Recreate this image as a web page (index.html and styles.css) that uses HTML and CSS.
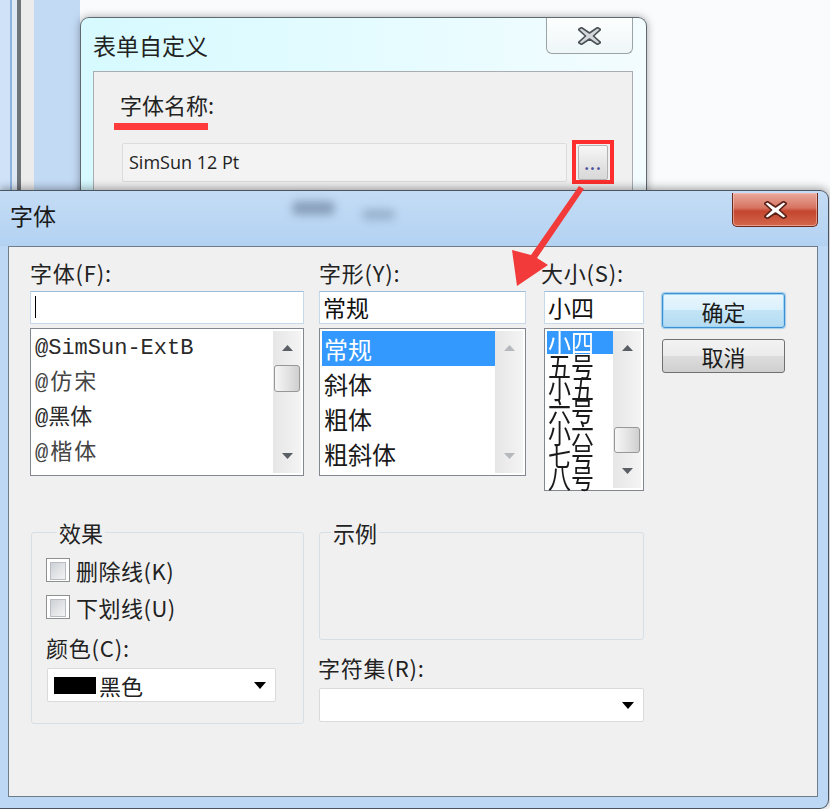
FILE: index.html
```html
<!DOCTYPE html>
<html lang="zh-CN">
<head>
    <meta charset="UTF-8">
    <meta name="viewport" content="width=device-width, initial-scale=1.0">
    <title>字体</title>
    <link rel="stylesheet" href="styles.css">
</head>
<body>
    <div class="desktop">
        <!-- 表单自定义 窗口 -->
        <section class="form-win">
            <header class="form-title">
                <h2>表单自定义</h2>
                <button class="close-btn close-plain">
                    <svg width="23" height="18" viewBox="-0.5 -0.5 23 18"><polygon points="0,2 3,0 11,5.5 19,0 22,2 15,8.5 22,15 19,17 11,11.5 3,17 0,15 7,8.5" fill="#d4d8db" stroke="#4b5257" stroke-width="1.6" stroke-linejoin="round"/></svg>
                </button>
            </header>
            <div class="form-body">
                <div class="form-label">字体名称:</div>
                <div class="red-mark"></div>
                <div class="field-row">
                    <div class="text-field">SimSun 12 Pt</div>
                    <div class="red-box"><button class="dots-btn">...</button></div>
                </div>
            </div>
        </section>

        <!-- 字体 对话框 -->
        <section class="font-win">
            <header class="font-title">
                <span class="title-text">字体</span>
                <span class="glass-blur blur-a"></span>
                <span class="glass-blur blur-b"></span>
                <button class="close-btn close-red">
                    <svg width="23" height="18" viewBox="-0.5 -0.5 23 18"><polygon points="0,2 3,0 11,5.5 19,0 22,2 15,8.5 22,15 19,17 11,11.5 3,17 0,15 7,8.5" fill="#ffffff" stroke="#5b2118" stroke-width="1.6" stroke-linejoin="round"/></svg>
                </button>
            </header>

            <div class="panel">
                <div class="top-row">
                    <!-- 字体 -->
                    <div class="col col-name">
                        <div class="label">字体(F):</div>
                        <div class="input"><span class="caret"></span></div>
                        <div class="listbox list-tall">
                            <ul class="items items-mono">
                                <li>@SimSun-ExtB</li>
                                <li class="fang">@仿宋</li>
                                <li>@黑体</li>
                                <li class="fang">@楷体</li>
                            </ul>
                            <div class="scrollbar">
                                <span class="sb-arrow"><svg width="11" height="6"><polygon points="0,6 5.5,0 11,6"/></svg></span>
                                <span class="sb-track"><span class="sb-thumb"></span></span>
                                <span class="sb-arrow"><svg width="11" height="6"><polygon points="0,0 11,0 5.5,6"/></svg></span>
                            </div>
                        </div>
                    </div>

                    <!-- 字形 -->
                    <div class="col col-style">
                        <div class="label">字形(Y):</div>
                        <div class="input">常规</div>
                        <div class="listbox list-tall">
                            <ul class="items">
                                <li class="selected">常规</li>
                                <li>斜体</li>
                                <li>粗体</li>
                                <li>粗斜体</li>
                            </ul>
                            <div class="scrollbar disabled">
                                <span class="sb-arrow"><svg width="11" height="6"><polygon points="0,6 5.5,0 11,6"/></svg></span>
                                <span class="sb-track"></span>
                                <span class="sb-arrow"><svg width="11" height="6"><polygon points="0,0 11,0 5.5,6"/></svg></span>
                            </div>
                        </div>
                    </div>

                    <!-- 大小 -->
                    <div class="col col-size">
                        <div class="label label-size">大小(S):</div>
                        <div class="input">小四</div>
                        <div class="listbox list-size">
                            <ul class="items items-size">
                                <li class="selected"><span>小四</span></li>
                                <li><span>五号</span></li>
                                <li><span>小五</span></li>
                                <li><span>六号</span></li>
                                <li><span>小六</span></li>
                                <li><span>七号</span></li>
                                <li><span>八号</span></li>
                            </ul>
                            <div class="scrollbar">
                                <span class="sb-arrow"><svg width="11" height="6"><polygon points="0,6 5.5,0 11,6"/></svg></span>
                                <span class="sb-track"><span class="sb-thumb thumb-low"></span></span>
                                <span class="sb-arrow"><svg width="11" height="6"><polygon points="0,0 11,0 5.5,6"/></svg></span>
                            </div>
                        </div>
                    </div>

                    <!-- 按钮 -->
                    <div class="col col-buttons">
                        <button class="btn btn-default">确定</button>
                        <button class="btn">取消</button>
                    </div>
                </div>

                <div class="bottom-row">
                    <div class="group group-effects">
                        <div class="group-title">效果</div>
                        <div class="check-row first"><span class="check"></span>删除线(K)</div>
                        <div class="check-row"><span class="check"></span>下划线(U)</div>
                        <div class="label color-label">颜色(C):</div>
                        <div class="combo combo-color">
                            <span class="swatch"></span>黑色
                            <svg class="combo-arrow" width="12" height="7"><polygon points="0,0 12,0 6,7"/></svg>
                        </div>
                    </div>

                    <div class="col-sample">
                        <div class="group group-sample">
                            <div class="group-title">示例</div>
                        </div>
                        <div class="label charset-label">字符集(R):</div>
                        <div class="combo">
                            <svg class="combo-arrow" width="12" height="7"><polygon points="0,0 12,0 6,7"/></svg>
                        </div>
                    </div>
                </div>
            </div>
        </section>

        <!-- 红色指示箭头 -->
        <svg class="callout" width="830" height="809" viewBox="0 0 830 809">
            <polygon points="579,186 584,189 537,258 548,265 517,286 512,250 531,255" fill="#f23a3a"/>
        </svg>
    </div>
</body>
</html>
```

FILE: styles.css
```css
* {
    box-sizing: border-box;
}

body {
    margin: 0;
    width: 830px;
    height: 809px;
    overflow: hidden;
    font-family: "Noto Sans CJK SC", "Noto Sans", sans-serif;
    color: #1c1c1c;
}

ul {
    list-style: none;
    margin: 0;
    padding: 0;
}

button {
    font-family: inherit;
    padding: 0;
    cursor: default;
}

.desktop {
    position: relative;
    width: 830px;
    height: 809px;
    background: linear-gradient(to right,
        #cfe2f8 0 10px, #8fb3df 10px 12px, #dde8f4 12px 17px,
        #6f7479 17px 21px, #ececec 21px 34px, #c3daf5 34px 80px,
        #fafbfd 80px);
}

/* ---------- 表单自定义 ---------- */

.form-win {
    position: absolute;
    left: 80px;
    top: 17px;
    width: 567px;
    height: 190px;
    border: 1px solid #5f6a70;
    border-bottom: none;
    border-radius: 9px 9px 0 0;
    background: linear-gradient(to right, #d6faff, #eafcff 70%, #f3fcff);
    box-shadow: 0 0 9px rgba(0, 0, 0, 0.35);
    display: flex;
    flex-direction: column;
    z-index: 1;
}

.form-title {
    height: 53px;
    display: flex;
    align-items: flex-start;
}

.form-title h2 {
    margin: 12px 0 0 12px;
    font-size: 23px;
    font-weight: normal;
    line-height: 30px;
    color: #222;
}

.close-btn {
    margin-left: auto;
    display: flex;
    align-items: center;
    justify-content: center;
}

.close-plain {
    margin-right: 13px;
    width: 87px;
    height: 36px;
    border: 1px solid #9aa3a8;
    border-top: none;
    border-radius: 0 0 6px 6px;
    background: linear-gradient(#fdfefe, #eef6f8);
}

.form-body {
    flex: 1;
    margin: 0 13px 0 12px;
    padding-left: 26px;
    background: #f0f0f0;
    border: 1px solid #a9adb0;
    border-bottom: none;
}

.form-label {
    margin-top: 19px;
    font-size: 22px;
    line-height: 26px;
    color: #222;
}

.red-mark {
    margin: 6px 0 0 -6px;
    width: 94px;
    height: 7px;
    background: #ff3b3b;
}

.field-row {
    display: flex;
    align-items: center;
    margin: 10px 0 0 2px;
    gap: 5px;
}

.text-field {
    width: 445px;
    height: 39px;
    padding-left: 6px;
    border: 1px solid #dcdcdc;
    border-radius: 2px;
    background: #f3f3f3;
    font-family: "Open Sans", "Noto Sans", sans-serif;
    font-size: 18px;
    line-height: 37px;
    color: #222;
}

.red-box {
    width: 42px;
    height: 44px;
    border: 4px solid #ff2e2e;
    padding: 1px 2px 0;
}

.dots-btn {
    display: block;
    width: 30px;
    height: 35px;
    border: 1px solid #b3b3b3;
    border-radius: 2px;
    background: linear-gradient(#f7f7f7, #e6e6e6 50%, #d8d8d8);
    font-size: 15px;
    font-weight: bold;
    line-height: 36px;
    letter-spacing: 1px;
    color: #4b4f9a;
}

/* ---------- 字体 对话框 ---------- */

.font-win {
    position: absolute;
    left: 0;
    top: 190px;
    width: 829px;
    height: 619px;
    border: 1px solid #4b5560;
    border-left: none;
    border-radius: 0 9px 9px 0;
    background: linear-gradient(to bottom, #c4dcf5, #b3d2f2 55px, #bcd8f5 55px);
    box-shadow: 0 -2px 8px rgba(0, 0, 0, 0.35);
    display: flex;
    flex-direction: column;
    z-index: 2;
}

.font-title {
    height: 55px;
    display: flex;
    align-items: flex-start;
    flex-shrink: 0;
}

.title-text {
    margin: 11px 0 0 10px;
    font-size: 23px;
    line-height: 26px;
    color: #1a1a1a;
}

.glass-blur {
    background: rgba(70, 90, 120, 0.45);
    border-radius: 6px;
    filter: blur(4px);
}

.blur-a {
    margin: 10px 0 0 236px;
    width: 43px;
    height: 14px;
}

.blur-b {
    margin: 18px 0 0 27px;
    width: 33px;
    height: 11px;
    background: rgba(70, 90, 120, 0.3);
}

.close-red {
    margin-right: 10px;
    margin-top: 2px;
    width: 86px;
    height: 34px;
    border: 1px solid #6b2a20;
    border-top: none;
    border-radius: 0 0 5px 5px;
    background: linear-gradient(#eaa99c, #d67462 45%, #c4452e 55%, #d3674d);
    box-shadow: inset 0 0 0 1px rgba(255, 210, 200, 0.5);
}

.panel {
    flex: 1;
    margin: 0 10px 11px 8px;
    background: #f0f0f0;
    border: 1px solid #6f7c8a;
}

.label {
    font-size: 22px;
    line-height: 26px;
    letter-spacing: 0.8px;
    color: #222;
}

.top-row {
    display: flex;
    align-items: flex-start;
    padding: 12px 0 0 21px;
}

.col-name {
    width: 274px;
}

.col-style {
    width: 207px;
    margin-left: 15px;
}

.col-size {
    width: 100px;
    margin-left: 18px;
}

.label-size {
    margin-left: -3px;
}

.col-buttons {
    width: 123px;
    margin-left: 18px;
    padding-top: 34px;
    display: flex;
    flex-direction: column;
    gap: 11px;
}

.input {
    margin-top: 6px;
    height: 33px;
    padding-left: 3px;
    border: 1px solid #c5d9ea;
    border-top-color: #9fbcd8;
    background: #fff;
    font-size: 23px;
    line-height: 30px;
    color: #111;
}

.caret {
    display: inline-block;
    width: 1px;
    height: 22px;
    margin: 4px 0 0 1px;
    background: #000;
    vertical-align: top;
}

.listbox {
    margin-top: 4px;
    border: 1px solid #828790;
    background: #fff;
    padding: 2px;
    display: flex;
}

.list-tall {
    height: 148px;
}

.list-size {
    height: 163px;
}

.items {
    flex: 1;
    overflow: hidden;
}

.items li {
    height: 35px;
    padding-left: 2px;
    font-size: 24px;
    line-height: 35px;
    color: #1a1a1a;
    white-space: nowrap;
}

.items-mono li {
    font-family: "Liberation Mono", "Noto Sans CJK SC", monospace;
    font-size: 22px;
    color: #2a2a2a;
}

.items-mono li.fang {
    color: #444;
    letter-spacing: 2px;
}

.items li.selected {
    background: #3399ff;
    color: #fff;
}

.items-size {
    overflow: visible;
}

.items-size li {
    height: 22.5px;
    line-height: 22.5px;
    font-size: 23px;
    padding-left: 1px;
}

.items-size li span {
    display: inline-block;
    transform: scaleY(1.2);
    transform-origin: 50% 55%;
}

.scrollbar {
    width: 28px;
    display: flex;
    flex-direction: column;
    background: linear-gradient(to right, #e6e6e6, #f4f4f4);
}

.sb-arrow {
    height: 34px;
    display: flex;
    align-items: center;
    justify-content: center;
    fill: #5a5f66;
}

.disabled .sb-arrow {
    fill: #b5b8bc;
}

.sb-track {
    flex: 1;
    padding: 0 1px;
}

.sb-thumb {
    display: block;
    height: 27px;
    border: 1px solid #979797;
    border-radius: 3px;
    background: linear-gradient(to right, #f6f6f6, #e4e4e4 50%, #cfcfcf);
}

.thumb-low {
    margin-top: 62px;
    height: 26px;
}

.btn {
    height: 35px;
    border: 1px solid #707070;
    border-radius: 3px;
    background: linear-gradient(#f3f3f3, #ebebeb 50%, #dddddd 50%, #cfcfcf);
    font-size: 22px;
    line-height: 30px;
    color: #1a1a1a;
}

.btn + .btn {
    height: 34px;
}

.btn-default {
    border-color: #3c8fd0;
    background: linear-gradient(#eaf6fd, #d9f0fc 50%, #c2e4f6 50%, #b4dbf1);
    box-shadow: inset 0 0 0 1px #9fd6f7, 0 0 1px 1px rgba(80, 170, 230, 0.5);
}

.bottom-row {
    display: flex;
    align-items: flex-start;
    margin-top: 41px;
    padding-left: 22px;
}

.group {
    border: 1px solid #d5dfe5;
    border-radius: 3px;
}

.group-title {
    width: fit-content;
    margin: -14px 0 0 11px;
    padding: 0 2px;
    background: #f0f0f0;
    font-size: 22px;
    line-height: 26px;
    color: #222;
}

.group-effects {
    width: 273px;
    height: 192px;
    padding-left: 14px;
}

.check-row {
    display: flex;
    align-items: center;
    height: 30px;
    margin-top: 7px;
    font-size: 22px;
    letter-spacing: 0.5px;
    color: #222;
}

.check-row.first {
    margin-top: 10px;
}

.check {
    width: 24px;
    height: 24px;
    margin-right: 6px;
    border: 1px solid #8e8f8f;
    background: #fff;
    padding: 3px;
}

.check::before {
    content: "";
    display: block;
    height: 100%;
    border: 1px solid #b9bdc2;
    background: linear-gradient(135deg, #cdd1d6, #f4f4f4);
}

.color-label {
    margin-top: 12px;
}

.combo {
    position: relative;
    margin-top: 8px;
    height: 34px;
    border: 1px solid #dadada;
    border-radius: 2px;
    background: #fff;
    display: flex;
    align-items: center;
    font-size: 22px;
    color: #222;
}

.combo-color {
    width: 229px;
    margin-left: 1px;
    padding-left: 6px;
}

.swatch {
    width: 42px;
    height: 17px;
    margin-right: 3px;
    background: #000;
}

.combo-arrow {
    margin-left: auto;
    margin-right: 9px;
    fill: #000;
}

.col-sample {
    width: 325px;
    margin-left: 15px;
}

.group-sample {
    height: 108px;
}

.charset-label {
    margin-top: 14px;
    margin-left: -1px;
}

/* ---------- 标注箭头 ---------- */

.callout {
    position: absolute;
    left: 0;
    top: 0;
    z-index: 3;
    pointer-events: none;
}
```
